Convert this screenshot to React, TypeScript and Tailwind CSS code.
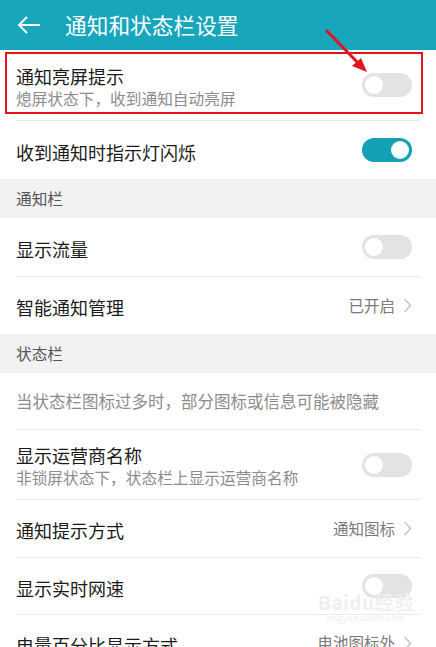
import React from "react";

const font = { fontFamily: '"Noto Sans CJK SC", "Noto Sans", sans-serif' };

const Toggle = ({ on }: { on?: boolean }) => (
  <div
    className={`w-[50px] h-[24px] rounded-full p-[3px] flex items-center shrink-0 ${
      on ? "bg-[#13a2b5] justify-end" : "bg-[#e3e3e3] justify-start"
    }`}
  >
    <div className="w-[18px] h-[18px] rounded-full bg-white" />
  </div>
);

const Chevron = () => (
  <svg width="9" height="15" viewBox="0 0 9 15" className="ml-[8px]">
    <path d="M1.5 1l6 6.5-6 6.5" fill="none" stroke="#c4c4c4" strokeWidth="1.5" />
  </svg>
);

const Sep = () => <div className="mx-4 h-px bg-[#e8e8e8]" />;

type RowProps = {
  title: string;
  sub?: string;
  toggle?: "on" | "off";
  value?: string;
  h: string;
};

const Row = ({ title, sub, toggle, value, h }: RowProps) => (
  <div className={`flex items-center justify-between pl-4 pr-[24px] ${h}`}>
    <div className="flex flex-col pt-[3px]">
      <span className="text-[18px] leading-[24px] text-[#1a1a1a]">{title}</span>
      {sub && <span className="text-[15.7px] leading-[22px] text-[#8c8c8c]">{sub}</span>}
    </div>
    {toggle && <Toggle on={toggle === "on"} />}
    {value && (
      <div className="flex items-center text-[15.5px] text-[#7a7a7a]">
        {value}
        <Chevron />
      </div>
    )}
  </div>
);

const Section = ({ label, h }: { label: string; h: string }) => (
  <div className={`bg-[#f2f2f2] flex items-center pl-4 text-[15.7px] text-[#555] ${h}`}>
    {label}
  </div>
);

export default function App() {
  return (
    <div className="relative w-[436px] h-[647px] overflow-hidden bg-white" style={font}>
      <header className="h-[50px] bg-[#17a6bc] flex items-center">
        <svg width="24" height="20" viewBox="0 0 24 20" className="ml-[17px]">
          <path d="M23 10H2M10 2l-8 8 8 8" fill="none" stroke="white" strokeWidth="2" />
        </svg>
        <h1 className="ml-[24px] text-[21.7px] text-white font-normal">通知和状态栏设置</h1>
      </header>

      <Row h="h-[70px]" title="通知亮屏提示" sub="熄屏状态下，收到通知自动亮屏" toggle="off" />
      <Sep />
      <Row h="h-[58px]" title="收到通知时指示灯闪烁" toggle="on" />
      <Section h="h-[39px]" label="通知栏" />
      <Row h="h-[58px]" title="显示流量" toggle="off" />
      <Sep />
      <Row h="h-[57px]" title="智能通知管理" value="已开启" />
      <Section h="h-[39px]" label="状态栏" />
      <div className="h-[56px] flex items-center pl-4 text-[16.5px] text-[#8c8c8c]">
        当状态栏图标过多时，部分图标或信息可能被隐藏
      </div>
      <Sep />
      <Row h="h-[69px]" title="显示运营商名称" sub="非锁屏状态下，状态栏上显示运营商名称" toggle="off" />
      <Sep />
      <Row h="h-[57px]" title="通知提示方式" value="通知图标" />
      <Sep />
      <Row h="h-[56px]" title="显示实时网速" toggle="off" />
      <Sep />
      <Row h="h-[56px]" title="电量百分比显示方式" value="电池图标外" />

      {/* annotation */}
      <div className="absolute left-[5px] top-[52px] w-[418px] h-[62px] border-2 border-[#e3141c]" />
      <svg className="absolute left-0 top-0" width="436" height="120">
        <line x1="326" y1="30" x2="360" y2="65" stroke="#e3141c" strokeWidth="3" />
        <polygon points="367,72 352,66 361,58" fill="#e3141c" />
      </svg>

      <div className="absolute left-[318px] top-[592px] flex flex-col items-center text-[#efefef] pointer-events-none">
        <span className="text-[19px] leading-[20px] font-bold tracking-wide">Baidu经验</span>
        <span className="text-[9px] leading-[11px]">jingyan.baidu.com</span>
      </div>
    </div>
  );
}
